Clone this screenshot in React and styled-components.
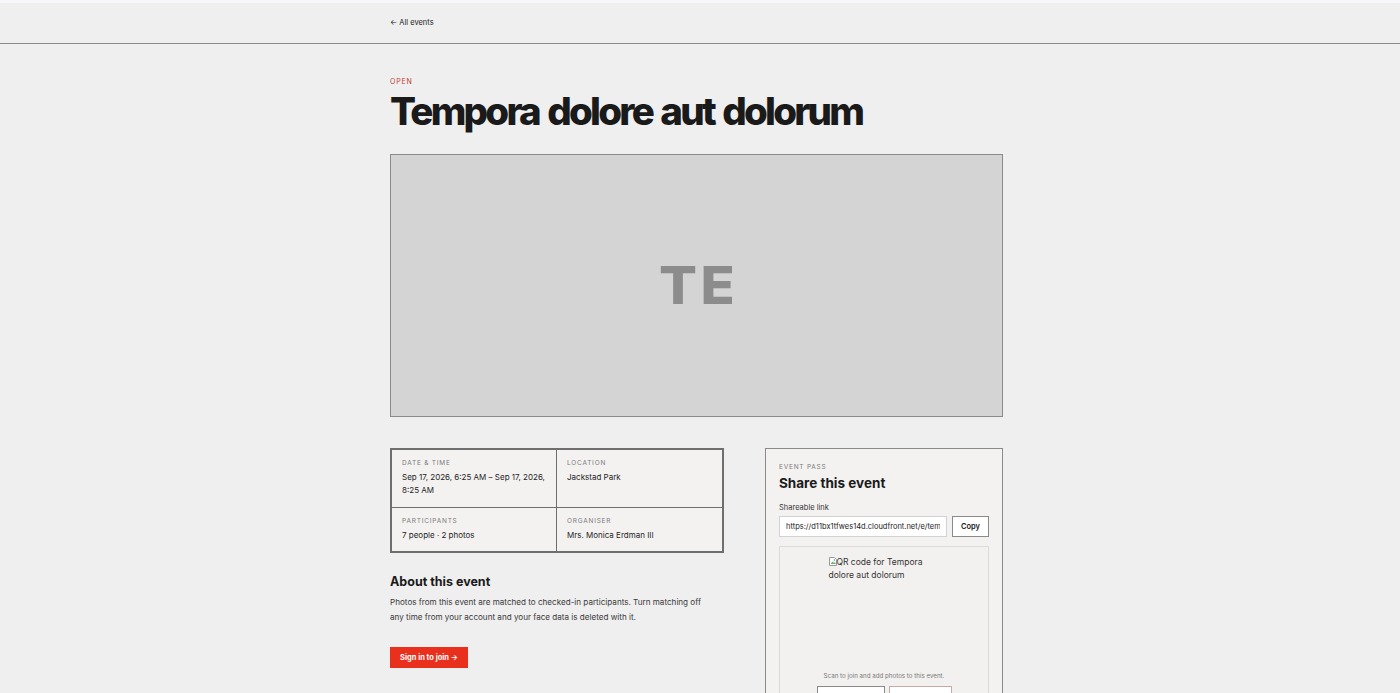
import React from 'react';
import styled, { createGlobalStyle } from 'styled-components';

const GlobalStyle = createGlobalStyle`
  * {
    box-sizing: border-box;
  }

  body {
    margin: 0;
    background: #efefef;
    color: #1c1c1c;
    font-family: Inter, "Noto Sans", sans-serif;
  }
`;

const Page = styled.div`
  border-top: 3px solid #f7f6fb;
`;

const TopBar = styled.header`
  height: 41px;
  border-bottom: 1px solid #8a8a8a;
  display: flex;
  align-items: center;
`;

const Container = styled.div`
  width: 620px;
  padding-right: 7px;
  margin: 0 auto;
`;

const BackLink = styled.a`
  display: block;
  font-size: 7.5px;
  line-height: 10px;
  color: #222;
  text-decoration: none;
`;

const Main = styled(Container)`
  padding-top: 33px;
`;

const Status = styled.div`
  font-size: 7px;
  letter-spacing: 0.12em;
  text-transform: uppercase;
  color: #c0392b;
`;

const Title = styled.h1`
  margin: 2px 0 0;
  font-size: 38.5px;
  line-height: 46px;
  font-weight: 800;
  letter-spacing: -0.072em;
  word-spacing: 0.07em;
  color: #1a1a1a;
`;

const Cover = styled.div`
  margin-top: 20px;
  height: 263px;
  background: #d4d4d4;
  border: 1px solid #8a8a8a;
  display: flex;
  align-items: center;
  justify-content: center;
`;

const Initials = styled.span`
  font-size: 52px;
  font-weight: 800;
  letter-spacing: 0.06em;
  color: #8c8c8c;
  margin-left: 4px;
  transform: scaleX(1.08);
`;

const Columns = styled.div`
  margin-top: 31px;
  display: grid;
  grid-template-columns: 334px 1fr 238px;
  align-items: start;
`;

const Details = styled.div`
  display: grid;
  grid-template-columns: 1fr 1fr;
  border: 2px solid #6e6e6e;
  background: #f4f2f1;
`;

const Cell = styled.div`
  padding: 9px 10px 8px;
  min-height: ${p => (p.$tall ? '58px' : '43px')};
  border-right: ${p => (p.$left ? '1px solid #6e6e6e' : 'none')};
  border-bottom: ${p => (p.$top ? '1px solid #6e6e6e' : 'none')};
`;

const Label = styled.div`
  font-size: 6.5px;
  letter-spacing: 0.12em;
  text-transform: uppercase;
  color: #7a7a7a;
`;

const Value = styled.div`
  margin-top: 4px;
  font-size: 8px;
  line-height: 13px;
  color: #1e1e1e;
`;

const AboutTitle = styled.h2`
  margin: 21px 0 0;
  font-size: 12.5px;
  font-weight: 700;
  color: #1a1a1a;
`;

const Paragraph = styled.p`
  margin: 6px 0 0;
  max-width: 318px;
  font-size: 8.1px;
  line-height: 15px;
  color: #3a3a3a;
`;

const JoinButton = styled.button`
  margin-top: 22px;
  height: 21px;
  padding: 0 10px;
  border: none;
  background: #e8301c;
  color: #fff;
  font-family: inherit;
  font-size: 7.5px;
  font-weight: 700;
`;

const ShareCard = styled.aside`
  grid-column: 3;
  border: 1px solid #8a8a8a;
  background: #f4f2f1;
  padding: 14px 13px 0 13px;
`;

const ShareTitle = styled.h3`
  margin: 4px 0 0;
  font-size: 13.5px;
  font-weight: 700;
  color: #1a1a1a;
`;

const FieldLabel = styled.div`
  margin-top: 12px;
  font-size: 7.5px;
  color: #333;
`;

const LinkRow = styled.div`
  margin-top: 4px;
  display: flex;
  gap: 5px;
`;

const LinkInput = styled.input`
  flex: 1;
  min-width: 0;
  height: 21px;
  padding: 0 6px;
  border: 1px solid #d2d2d2;
  background: #fff;
  font-family: inherit;
  font-size: 7.5px;
  color: #222;
`;

const CopyButton = styled.button`
  width: 37px;
  height: 21px;
  border: 1px solid #8a8a8a;
  background: #fff;
  font-family: inherit;
  font-size: 7.5px;
  font-weight: 600;
  color: #1a1a1a;
`;

const QrPanel = styled.div`
  margin-top: 9px;
  border: 1px solid #dedad8;
  background: #f3f1f0;
  padding: 9px 0 0;
  display: flex;
  flex-direction: column;
  align-items: center;
`;

const QrImage = styled.div`
  width: 111px;
  height: 108px;
  font-size: 8.5px;
  line-height: 13px;
  color: #333;
`;

const BrokenIcon = styled.svg`
  vertical-align: -1px;
`;

const ScanNote = styled.div`
  margin-top: 8px;
  font-size: 6.2px;
  color: #777;
`;

const QrActions = styled.div`
  margin-top: 7px;
  display: flex;
  gap: 4px;
`;

const QrAction = styled.button`
  width: ${p => p.$w}px;
  height: 20px;
  border: 1px solid ${p => p.$border};
  background: #fff;
`;

function App() {
  return (
    <Page>
      <GlobalStyle />
      <TopBar>
        <Container>
          <BackLink href="#">← All events</BackLink>
        </Container>
      </TopBar>

      <Main>
        <Status>Open</Status>
        <Title>Tempora dolore aut dolorum</Title>

        <Cover>
          <Initials>TE</Initials>
        </Cover>

        <Columns>
          <div>
            <Details>
              <Cell $left $top $tall>
                <Label>Date &amp; time</Label>
                <Value>Sep 17, 2026, 6:25 AM – Sep 17, 2026, 8:25 AM</Value>
              </Cell>
              <Cell $top $tall>
                <Label>Location</Label>
                <Value>Jackstad Park</Value>
              </Cell>
              <Cell $left>
                <Label>Participants</Label>
                <Value>7 people · 2 photos</Value>
              </Cell>
              <Cell>
                <Label>Organiser</Label>
                <Value>Mrs. Monica Erdman III</Value>
              </Cell>
            </Details>

            <AboutTitle>About this event</AboutTitle>
            <Paragraph>
              Photos from this event are matched to checked-in participants. Turn matching off
              any time from your account and your face data is deleted with it.
            </Paragraph>
            <JoinButton>Sign in to join →</JoinButton>
          </div>

          <ShareCard>
            <Label>Event pass</Label>
            <ShareTitle>Share this event</ShareTitle>
            <FieldLabel>Shareable link</FieldLabel>
            <LinkRow>
              <LinkInput readOnly value="https://d11bx1tfwes14d.cloudfront.net/e/tempora-dolore-aut-dolorum" />
              <CopyButton>Copy</CopyButton>
            </LinkRow>

            <QrPanel>
              <QrImage>
                <BrokenIcon width="8" height="9" viewBox="0 0 8 9">
                  <path d="M0.5 0.5h5l2 2v6h-7z" fill="#fff" stroke="#9a9a9a" />
                  <path d="M1.5 7l2-2.5 1.5 1.5 1-1 1 2z" fill="#6bb36b" />
                  <circle cx="5.5" cy="3" r="0.8" fill="#4c8fd8" />
                </BrokenIcon>
                QR code for Tempora dolore aut dolorum
              </QrImage>
              <ScanNote>Scan to join and add photos to this event.</ScanNote>
              <QrActions>
                <QrAction $w={68} $border="#8a8a8a" />
                <QrAction $w={63} $border="#c9a9a4" />
              </QrActions>
            </QrPanel>
          </ShareCard>
        </Columns>
      </Main>
    </Page>
  );
}

export default App;
